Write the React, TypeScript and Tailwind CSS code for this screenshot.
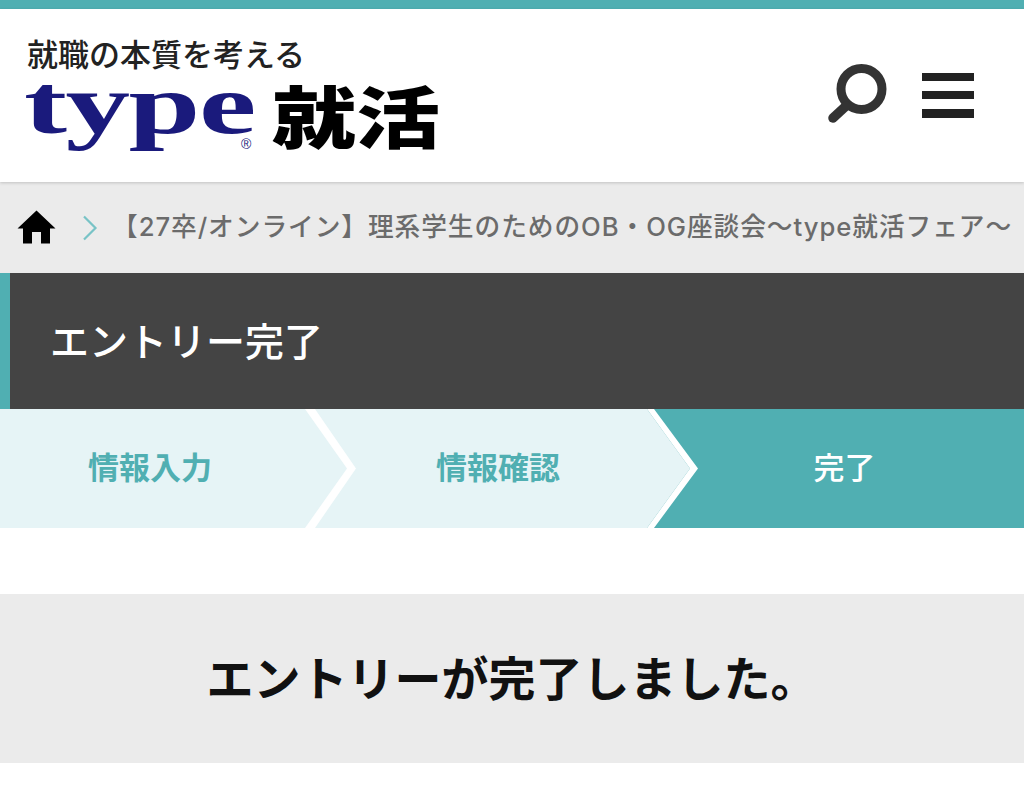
const JP = "font-['Noto_Sans_CJK_JP',sans-serif]";

function Chevron({ fill, w, topW, tipX, tipW }: { fill: string; w: number; topW: number; tipX: number; tipW: number }) {
  return (
    <svg width={w} height={119} viewBox={`0 0 ${w} 119`} className="shrink-0 block">
      <rect width={w} height={119} fill={fill} />
      <polygon points={`0,0 ${tipX},59.5 0,119`} fill="#e6f4f6" />
      <polygon points={`0,0 ${topW},0 ${tipX + tipW},59.5 ${topW},119 0,119 ${tipX},59.5`} fill="#ffffff" />
    </svg>
  );
}

export default function App() {
  return (
    <div className={`w-[1024px] h-[812px] overflow-hidden bg-white ${JP}`}>
      <div className="h-[9px] bg-[#50afb2]" />
      <header className="relative z-10 h-[173px] bg-white shadow-[0_1px_3px_rgba(0,0,0,0.18)] flex items-center justify-between pl-[26px] pr-[50px]">
        <div className="flex flex-col">
          <div className="text-[31px] leading-[36px] font-medium text-[#222] whitespace-nowrap pl-px -mt-[4px]">就職の本質を考える</div>
          <div className="flex items-start h-[82px] whitespace-nowrap">
            <div className="relative w-[246px] h-[82px] pt-[5px]">
              <span className="block origin-top-left -ml-[2px] scale-x-[1.52] font-['Liberation_Serif',serif] font-bold text-[85px] leading-[56px] tracking-[-1px] text-[#1a1a7c]">type</span>
              <span className="absolute left-[215px] top-[66px] font-['Liberation_Sans',sans-serif] text-[14px] leading-none text-[#1a1a7c]">®</span>
            </div>
            <span className="block origin-top scale-y-[0.8] text-[84px] leading-[84px] font-black text-black mt-[10px]">就活</span>
          </div>
        </div>
        <div className="flex items-center gap-[35px] pb-[4px]">
          <svg width="60" height="60" viewBox="0 0 60 60" className="block">
            <circle cx="34.5" cy="25" r="20.5" fill="none" stroke="#333" strokeWidth="9" />
            <line x1="19" y1="42" x2="6" y2="54" stroke="#333" strokeWidth="9.5" strokeLinecap="round" />
          </svg>
          <div className="flex flex-col gap-[10px] w-[52px] mt-[3px]">
            <div className="h-[8px] bg-[#222]" />
            <div className="h-[8px] bg-[#222]" />
            <div className="h-[9px] bg-[#222]" />
          </div>
        </div>
      </header>

      <nav className="h-[91px] bg-[#ebebeb] flex items-center pl-[17px] whitespace-nowrap overflow-hidden">
        <svg width="39" height="34" viewBox="0 0 39 34" className="block shrink-0 -mt-[2px]">
          <path d="M19.5 0.5 L38.5 18.5 L33 18.5 L33 33.5 L24 33.5 L24 22 L15 22 L15 33.5 L6 33.5 L6 18.5 L0.5 18.5 Z" fill="#000" />
        </svg>
        <svg width="16" height="26" viewBox="0 0 16 26" className="block shrink-0 ml-[26px]">
          <polyline points="2,1.5 13.5,13 2,24.5" fill="none" stroke="#78c3c6" strokeWidth="2.2" />
        </svg>
        <span className="ml-[14px] pb-[1px] font-['Inter','Noto_Sans_CJK_JP',sans-serif] text-[25.7px] tracking-[0.95px] font-medium text-[#6b6b6b]">【27卒/オンライン】理系学生のためのOB・OG座談会〜type就活フェア〜</span>
      </nav>

      <div className="h-[136px] bg-[#444444] border-l-[10px] border-[#50afb2] flex items-center pl-[40px]">
        <h1 className="text-[39px] font-medium text-white pb-[3px]">エントリー完了</h1>
      </div>

      <div className="flex h-[119px] bg-[#e6f4f6]">
        <div className="w-[305px] flex items-center justify-center pr-[5px] pb-[4px] text-[31px] font-bold text-[#50afb2]">情報入力</div>
        <Chevron fill="#e6f4f6" w={52} topW={10} tipX={42} tipW={9} />
        <div className="w-[290px] flex items-center justify-center pr-[8px] pb-[4px] text-[31px] font-bold text-[#50afb2]">情報確認</div>
        <Chevron fill="#50afb2" w={51} topW={7} tipX={43} tipW={8} />
        <div className="flex-1 bg-[#50afb2] flex items-center justify-center pr-[33px] pb-[4px] text-[31px] font-medium text-white">完了</div>
      </div>

      <div className="mt-[66px] h-[169px] bg-[#ebebeb] flex items-center justify-center">
        <p className="text-[47px] font-bold text-[#111] whitespace-nowrap pb-[4px]">エントリーが完了しました。</p>
      </div>
    </div>
  );
}
